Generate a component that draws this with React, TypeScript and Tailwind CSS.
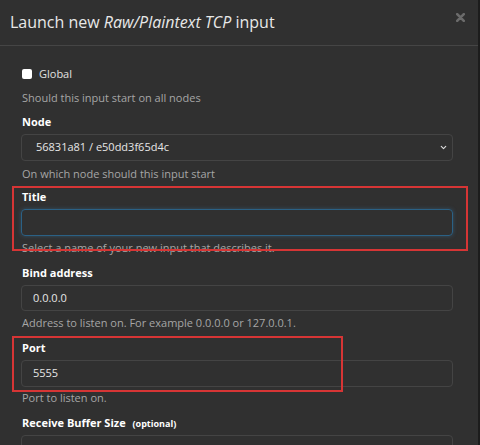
import { ChevronDown } from 'lucide-react'

const font = { fontFamily: '"Open Sans", "DejaVu Sans", sans-serif' }

function Label({ children }: { children: React.ReactNode }) {
  return <div className="h-[16px] leading-[16px] mb-[4px] font-bold text-white text-[11px]">{children}</div>
}

function Help({ children, className = 'mt-[4px]' }: { children: React.ReactNode; className?: string }) {
  return <div className={`${className} h-[16px] leading-[16px] text-[11px] text-[#a6a6a6]`}>{children}</div>
}

export default function App() {
  return (
    <div className="w-[480px] h-[445px] overflow-hidden bg-[#1c1c1c] flex" style={font}>
      <div className="w-[478px] h-full bg-[#303030] flex flex-col">
        {/* Header */}
        <div className="h-[46px] border-b border-[#454545] flex items-center justify-between pl-[10px] pr-[13px] shrink-0">
          <h4 className="text-[16px] text-[#e8e8e8] leading-none -mt-[2px]">
            Launch new <em>Raw/Plaintext TCP</em> input
          </h4>
          <svg width="9" height="9" viewBox="0 0 9 9" className="-mt-[10px]">
            <path d="M1.2 1.2 L7.8 7.8 M7.8 1.2 L1.2 7.8" stroke="#6b6b6b" strokeWidth="2.6" strokeLinecap="round" />
          </svg>
        </div>

        {/* Body */}
        <div className="pt-[20px] pl-[21px] pr-[25px]">
          <div className="h-[16px] flex items-center gap-[7px] pl-[1px]">
            <span className="w-[10px] h-[10px] bg-white rounded-[2px]" />
            <span className="text-[11px] text-[#e0e0e0]">Global</span>
          </div>
          <div className="mt-[8px] h-[16px] leading-[16px] text-[11px] text-[#a6a6a6] pl-[1px]">
            Should this input start on all nodes
          </div>

          <div className="mt-[8px] pl-[1px]">
            <Label>Node</Label>
            <div className="-ml-[1px] h-[27px] border border-[#444] rounded-[4px] flex items-center justify-between pl-[14px] pr-[4px] text-[11px] text-[#e6e6e6]">
              <span>56831a81 / e50dd3f65d4c</span>
              <ChevronDown className="w-[9px] h-[9px] text-[#ddd]" strokeWidth={3} />
            </div>
            <Help className="mt-[5px]">On which node should this input start</Help>
          </div>

          {/* Title group */}
          <div className="relative mt-[7px] pl-[1px]">
            <Label>Title</Label>
            <div className="-ml-[1px] h-[27px] border border-[#2b6185] rounded-[4px] shadow-[0_0_4px_rgba(60,140,200,0.35)]" />
            <Help>Select a name of your new input that describes it.</Help>
            <div className="absolute left-[-9px] top-[-3px] w-[456px] h-[65px] border-2 border-[#d63535]" />
          </div>

          <div className="mt-[9px] pl-[1px]">
            <Label>Bind address</Label>
            <div className="-ml-[1px] h-[26px] border border-[#444] rounded-[4px] flex items-center pl-[11px] text-[11px] text-[#e6e6e6]">
              0.0.0.0
            </div>
            <Help>Address to listen on. For example 0.0.0.0 or 127.0.0.1.</Help>
          </div>

          {/* Port group */}
          <div className="relative mt-[9px] pl-[1px]">
            <Label>Port</Label>
            <div className="-ml-[1px] h-[27px] border border-[#444] rounded-[4px] flex items-center pl-[11px] text-[11px] text-[#e6e6e6]">
              5555
            </div>
            <Help className="mt-[3px]">Port to listen on.</Help>
            <div className="absolute left-[-9px] top-[-4px] w-[331px] h-[56px] border-2 border-[#d63535]" />
          </div>

          <div className="mt-[9px] pl-[1px]">
            <Label>
              Receive Buffer Size <span className="ml-[4px] text-[9px]">(optional)</span>
            </Label>
            <div className="-ml-[1px] h-[27px] border border-[#444] rounded-[4px]" />
          </div>
        </div>
      </div>
    </div>
  )
}
